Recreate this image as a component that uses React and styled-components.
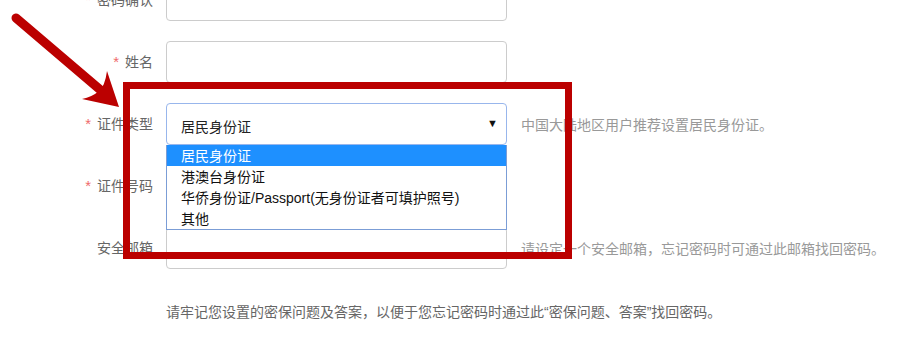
import React from 'react'
import styled, { createGlobalStyle } from 'styled-components'

const Global = createGlobalStyle`
  html, body {
    margin: 0;
    padding: 0;
    background: #fff;
    overflow: hidden;
  }
  body {
    font-family: "Liberation Sans", "Noto Sans CJK SC", sans-serif;
  }
`;

const Page = styled.div`
  position: relative;
  width: 899px;
  height: 348px;
  overflow: hidden;
`;

const Form = styled.div`
  display: flex;
  flex-direction: column;
  gap: 20px;
  margin-top: -21px;
`;

const Row = styled.div`
  display: flex;
  align-items: center;
  height: 42px;
`;

const Label = styled.div`
  width: 153px;
  margin-right: 13px;
  text-align: right;
  font-size: 14px;
  color: #666;
  line-height: 20px;
`;

const Star = styled.span`
  color: #ef6b6b;
  font-size: 15px;
  margin-right: 6px;
`;

const Input = styled.div`
  width: 341px;
  height: 42px;
  box-sizing: border-box;
  border: 1px solid #cccccc;
  border-radius: 4px;
  background: #fff;
`;

const SelectWrap = styled.div`
  position: relative;
  width: 341px;
  height: 42px;
`;

const Select = styled.div`
  display: flex;
  align-items: center;
  justify-content: space-between;
  height: 42px;
  box-sizing: border-box;
  padding: 4px 8px 0 14px;
  border: 1px solid #98b6ec;
  border-radius: 4px;
  font-size: 14px;
  color: #222;
`;

const Caret = styled.span`
  font-size: 11px;
  color: #111;
  margin-top: -6px;
`;

const List = styled.div`
  position: absolute;
  top: 42px;
  left: 0;
  right: 0;
  z-index: 2;
  background: #fff;
  border: 1px solid #7b9dd6;
  border-top: none;
`;

const Option = styled.div`
  height: 21px;
  line-height: 22px;
  padding-left: 14px;
  font-size: 14px;
  color: ${p => (p.$active ? '#fff' : '#111')};
  background: ${p => (p.$active ? '#1e90ff' : 'transparent')};
`;

const Hint = styled.div`
  margin-left: 14px;
  font-size: 14px;
  color: #999;
`;

const Note = styled.div`
  margin: 32px 0 0 166px;
  font-size: 14px;
  color: #666;
`;

const Overlay = styled.svg`
  position: absolute;
  left: 0;
  top: 0;
  z-index: 5;
  pointer-events: none;
`;

const options = [
  '居民身份证',
  '港澳台身份证',
  '华侨身份证/Passport(无身份证者可填护照号)',
  '其他',
];

export default function App() {
  return (
    <Page>
      <Global />
      <Form>
        <Row>
          <Label><Star>*</Star>密码确认</Label>
          <Input />
        </Row>
        <Row>
          <Label><Star>*</Star>姓名</Label>
          <Input />
        </Row>
        <Row>
          <Label><Star>*</Star>证件类型</Label>
          <SelectWrap>
            <Select>
              居民身份证
              <Caret>▼</Caret>
            </Select>
            <List>
              {options.map((o, i) => (
                <Option key={o} $active={i === 0}>{o}</Option>
              ))}
            </List>
          </SelectWrap>
          <Hint>中国大陆地区用户推荐设置居民身份证。</Hint>
        </Row>
        <Row>
          <Label><Star>*</Star>证件号码</Label>
          <Input />
        </Row>
        <Row>
          <Label>安全邮箱</Label>
          <Input />
          <Hint>请设定一个安全邮箱，忘记密码时可通过此邮箱找回密码。</Hint>
        </Row>
      </Form>
      <Note>请牢记您设置的密保问题及答案，以便于您忘记密码时通过此“密保问题、答案”找回密码。</Note>

      <Overlay width="899" height="348" viewBox="0 0 899 348">
        <rect x="126.5" y="85.5" width="442" height="170" fill="none" stroke="#bb0000" strokeWidth="7" />
        <line x1="16" y1="18" x2="104" y2="93" stroke="#bb0000" strokeWidth="9" strokeLinecap="round" />
        <path d="M119 107 L107 71 Q105 86 99 91 Q92 97 82 99 Z" fill="#bb0000" />
      </Overlay>
    </Page>
  )
}
